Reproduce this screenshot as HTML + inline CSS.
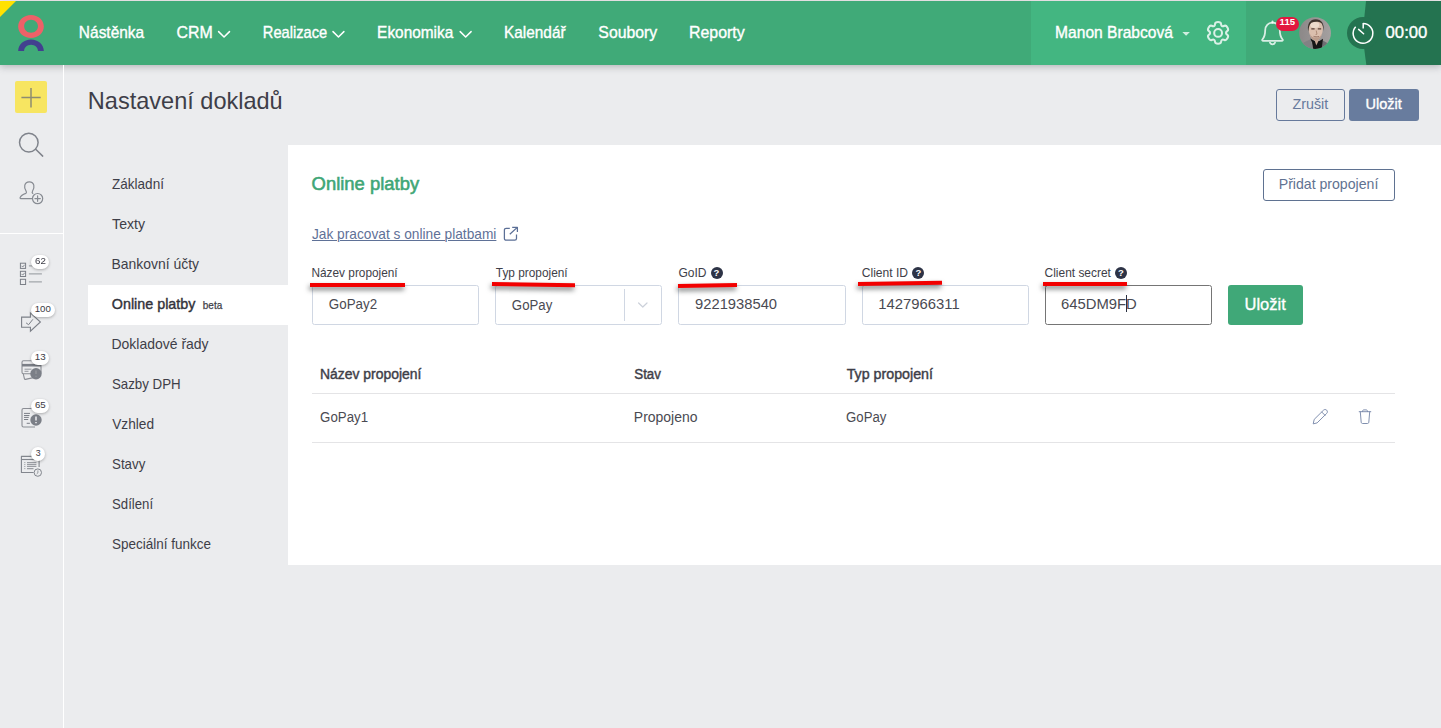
<!DOCTYPE html>
<html lang="cs">
<head>
<meta charset="utf-8">
<title>Nastavení dokladů</title>
<style>
*{box-sizing:border-box;margin:0;padding:0}
html,body{width:1441px;height:728px;overflow:hidden}
body{font-family:"Liberation Sans",sans-serif;background:#ebecee;color:#3b3b45;position:relative}
.abs{position:absolute}
svg{position:absolute;overflow:visible}
.t{position:absolute;white-space:nowrap;line-height:1;transform-origin:0 0}
#topline{left:0;top:0;width:1441px;height:1px;background:#f1ecee}
#hdr{left:0;top:1px;width:1441px;height:64px;background:#40aa78;box-shadow:0 2px 7px rgba(60,60,70,.30)}
#hdr .user{left:1031px;top:0;width:215px;height:64px;background:#43b681}
#hdr .timer{left:1364px;top:0;width:77px;height:64px;background:#247350;clip-path:polygon(2px 0,0 30%,0 72%,2.3px 100%,100% 100%,100% 0)}
#hdr .tcirc{left:1346.5px;top:15.5px;width:32px;height:32px;border-radius:50%;background:#247350}
#hdr .tri{left:0;top:0;width:0;height:0;border-top:16.5px solid #ffe100;border-right:16.5px solid transparent}
#side{left:0;top:65px;width:64px;height:663px;border-right:1px solid #fff}
#side .sep{left:0;top:168px;width:63px;height:1px;background:#fff}
.badge{position:absolute;background:#fff;border-radius:8px;height:14.2px;box-shadow:0 1px 3px rgba(0,0,0,.28)}
.btn{position:absolute;border-radius:3px}
#panel{left:288px;top:145px;width:1153px;height:420px;background:#fff}
#active{left:88px;top:285px;width:200px;height:40px;background:#fff}
.inp{position:absolute;top:285px;height:40px;width:167px;border:1px solid #d0d7e3;border-radius:2.5px;background:#fff}
.red{position:absolute;height:4px;background:#f20000;box-shadow:-1px 3px 5px rgba(30,35,35,.6);transform-origin:0 50%}
.hl{position:absolute;left:312px;width:1083px;height:1px;background:#e4e4e6}
.q{position:absolute;width:12px;height:12px;border-radius:50%;background:#2d3346;color:#fff;font-size:9.5px;font-weight:bold;line-height:12px;text-align:center}
</style>
</head>
<body>
<div id="topline" class="abs"></div>

<!-- HEADER -->
<div id="hdr" class="abs">
  <div class="abs user"></div>
  <div class="abs timer"></div>
  <div class="abs tcirc"></div>
  <div class="abs tri"></div>
</div>
<svg class="ov" width="1441" height="728" viewBox="0 0 1441 728" style="left:0;top:0" fill="none">
<!-- logo -->
<path fill="#ee6168" fill-rule="evenodd" d="M31 14.9c7.1 0 12.85 5.15 12.85 11.5S38.1 37.9 31 37.900S18.15 32.75 18.15 26.4 23.9 14.9 31 14.9zm.05 4.9c-3.85 0-6.95 2.9-6.950 6.5s3.1 6.5 6.950 6.5 6.950-2.900 6.950-6.5-3.100-6.500-6.950-6.500z"/>
<path fill="#42408f" d="M18.15 50.9c0-6.350 5.750-11.500 12.850-11.500s12.850 5.150 12.850 11.500h-5.850c0-3.400-3.100-6.200-6.950-6.200s-6.950 2.800-6.950 6.200z"/>
<!-- nav chevrons -->
<g stroke="#fff" stroke-width="1.5" stroke-linecap="round" stroke-linejoin="round">
<path d="M218.6 31.6l5.450 5.400 5.450-5.400"/>
<path d="M333 31.600l5.450 5.400 5.450-5.400"/>
<path d="M460.200 31.600l5.450 5.400 5.450-5.400"/>
</g>
<!-- caret -->
<path fill="#fff" fill-opacity=".75" d="M1182.300 31.900h7.600l-3.800 3.900z"/>
<!-- gear -->
<g stroke="#fff" stroke-opacity=".8" stroke-width="2.050" stroke-linejoin="round">
<circle cx="1218.100" cy="32.900" r="3.900"/>
<path d="M1222.02 26.02Q1221.18 25.54 1221.02 23.80Q1220.85 22.06 1218.05 22.06Q1215.25 22.06 1215.08 23.80Q1214.92 25.54 1214.08 26.02Q1213.24 26.51 1211.65 25.78Q1210.06 25.05 1208.66 27.48Q1207.26 29.91 1208.68 30.92Q1210.11 31.93 1210.11 32.90Q1210.11 33.87 1208.68 34.88Q1207.26 35.89 1208.66 38.32Q1210.06 40.75 1211.65 40.02Q1213.24 39.29 1214.08 39.78Q1214.92 40.26 1215.08 42.00Q1215.25 43.74 1218.05 43.74Q1220.85 43.74 1221.02 42.00Q1221.18 40.26 1222.02 39.78Q1222.86 39.29 1224.45 40.02Q1226.04 40.75 1227.44 38.32Q1228.84 35.89 1227.42 34.88Q1225.99 33.87 1225.99 32.90Q1225.99 31.93 1227.42 30.92Q1228.84 29.91 1227.44 27.48Q1226.04 25.05 1224.45 25.78Q1222.86 26.51 1222.02 26.02z"/>
</g>
<!-- bell -->
<g stroke="#fff" stroke-opacity=".8" stroke-width="1.800" stroke-linecap="round" stroke-linejoin="round">
<path d="M1272.500 22.700c-4.300 0-7.300 3.300-7.300 7.500 0 5.500-1.400 7.600-2.800 9.300-.500.600-.100 1.400.700 1.400h18.800c.800 0 1.200-.800.700-1.400-1.400-1.700-2.800-3.800-2.800-9.300 0-4.200-3-7.500-7.300-7.500z"/>
<path d="M1272.500 22.500v-1.200"/>
<path d="M1270 42.700c.400 1 1.400 1.600 2.500 1.600s2.100-.6 2.500-1.600"/>
</g>
<!-- badge -->
<rect x="1276" y="16.900" width="23" height="14.100" rx="7" fill="#e2173f"/>
<!-- avatar -->
<clipPath id="avc"><circle cx="1315.050" cy="33.050" r="15.900"/></clipPath>
<filter id="avb" x="-20%" y="-20%" width="140%" height="140%"><feGaussianBlur stdDeviation=".55"/></filter>
<linearGradient id="avg" x1="0" x2="1" y1="0" y2="0"><stop offset="0" stop-color="#8b8787"/><stop offset="1" stop-color="#a5a1a1"/></linearGradient>
<g clip-path="url(#avc)">
<rect x="1298" y="16" width="34" height="34" fill="url(#avg)"/>
<g filter="url(#avb)">
<path d="M1299 50l2.500-6.500 9-4.300 2.500 10.800z" fill="#828284"/>
<path d="M1331 50l-2-6-8-4.500-2 10.500z" fill="#6e6e72"/>
<path d="M1310.300 38.500l1.800 4 1.200 7.500h8.300l.8-7 .6-4.200-3.500 2.200h-5z" fill="#141414"/>
<path d="M1314.500 40l1.800 5.500 2.600-5.500z" fill="#c9a896"/>
<path d="M1308.600 28c0-5 3-8.200 7.100-8.200s7.200 3.200 7.200 8.200c0 5.500-2.600 12.300-7.200 12.300s-7.100-6.800-7.100-12.300z" fill="#dbbfae"/>
<ellipse cx="1314.800" cy="25" rx="4.500" ry="3" fill="#ecdacc"/>
<path d="M1308.300 31.500c-1.500-7.500 1.800-12.300 7.400-12.300 5.500 0 9 4 7.800 12-.2-3.800-.8-6.800-2.300-8.200-2.400-1.500-7-1.500-9.800-.2-2 1.800-2.600 4.700-3.100 8.700z" fill="#3d332d"/>
<path d="M1311.300 28.900h3.300M1317.800 28.900h3.400" stroke="#5a4036" stroke-width="1.100"/>
<path d="M1316.200 30.500l.8 3.700-1.400.3" stroke="#a98672" stroke-width=".9" fill="none"/>
<path d="M1313.600 36.400c1.400.7 3.700.7 5.200 0" stroke="#8f6a5c" stroke-width="1" fill="none"/>
<path d="M1309.800 33.500c.8 4.800 3.400 7 6 7s5.200-2.200 6-7c-1 3-3.500 4.300-6 4.300s-5-1.300-6-4.300z" fill="#bb9c8b"/>
</g>
</g>
<!-- clock -->
<g stroke="#fff" stroke-width="1.500" stroke-linecap="butt">
<path d="M1363.00 23.55A9.85 9.85 0 1 1 1355.68 26.81"/>
<path d="M1363.200 22.900v5.700"/>
<path d="M1358.600 29.400l5 4.300" stroke-linecap="round"/>
</g>
</svg>


<!-- SIDEBAR -->
<div id="side" class="abs">
  <div class="abs sep"></div>
</div>
<svg class="ov" width="70" height="728" viewBox="0 0 70 728" style="left:0;top:0" fill="none">
<!-- plus -->
<rect x="15" y="81" width="32" height="32" rx="2" fill="#f7e561"/>
<path d="M21.400 97.500h19.300M31 87.900v19.500" stroke="#8d8c72" stroke-width="1.500"/>
<!-- search -->
<g stroke="#7f838b" stroke-width="1.500" stroke-linecap="round">
<circle cx="28.800" cy="142.600" r="9.300"/>
<path d="M35.700 149.300l7 6.800"/>
</g>
<!-- user plus -->
<g stroke="#878b92" stroke-width="1.200" stroke-linecap="round" stroke-linejoin="round">
<path d="M32 198.600h-11.200c-.600 0-.900-.500-.700-1 .900-2.300 3.300-3.400 5.700-4.200.700-.300.800-1.400.300-2.200-1.400-1.900-1.800-4-1.300-6 .500-2.200 2.300-3.400 4.500-3.400s4 1.200 4.500 3.400c.500 2-.1 4.100-1.300 6-.500.800-.400 1.700.300 2.200"/>
<circle cx="37.600" cy="198.600" r="5.100" fill="#ebecee"/>
<path d="M37.600 195.900v5.400M34.900 198.600h5.400"/>
</g>
<!-- checklist -->
<g stroke="#7b7f87" stroke-width="1">
<rect x="20.400" y="263.200" width="5.200" height="5.200"/>
<rect x="20.400" y="271.300" width="5.200" height="5.200"/>
<rect x="20.400" y="279.300" width="5.200" height="5.200"/>
<path d="M21.500 265.800l1.200 1.200 2-2.300M21.500 273.900l1.200 1.200 2-2.300" stroke-width=".9"/>
</g>
<path d="M28.900 265.800h13M28.900 273.800h13M28.900 281.800h13" stroke="#a3a6ab" stroke-width="1.300"/>
<!-- arrow check -->
<g stroke="#7b7f87" stroke-width="1.100" stroke-linejoin="miter">
<path d="M21.600 317.100h8.800v-4.200l10 9.100-10 9.200v-4h-8.800z"/>
<path d="M26.100 322.900l2.500 1.800 4.300-5.400" stroke-width="1"/>
</g>
<!-- card with ! -->
<g stroke="#8a8d94" stroke-width="1.100" stroke-linejoin="round">
<path d="M23.200 373.500l1.200 5.200c.100.500.600.800 1.100.700l9-2"/>
<rect x="22" y="360.800" width="19" height="13" rx="1.500" fill="#ebecee"/>
<path d="M22 365.200h19" stroke-width="2.600" stroke="#7b7f87"/>
<path d="M24.500 369.200h7M24.500 371.300h4" stroke-width=".9"/>
</g>
<circle cx="36" cy="373.700" r="5.700" fill="#7b7f87"/>
<path d="M36 370.500v3.600M36 375.700v1.100" stroke="#92959b" stroke-width="1.500"/>
<!-- doc with ! -->
<g stroke="#8a8d94" stroke-width="1.100" stroke-linejoin="round">
<path d="M35.500 408.500h-12c-.8 0-1.500.7-1.500 1.500v15.500c0 .8.700 1.500 1.500 1.500h11.500"/>
<path d="M24 413.400h6M24 415.500h5.400M24 417.400h4.800M24 419.500h4.200M26.700 423.300h3.200" stroke-width="1" stroke="#7b7f87"/>
</g>
<circle cx="36" cy="420" r="5.700" fill="#7b7f87"/>
<path d="M36 416.600v3.800M36 422v1.200" stroke="#e6e7ea" stroke-width="1.600"/>
<!-- calendar list w clock -->
<g stroke="#82868d" stroke-width="1.100" stroke-linejoin="round">
<path d="M33.600 472.500h-12.200v-16.100h17.700v10.500"/>
<path d="M21.400 459.500h17.700"/>
<path d="M24.200 462.600h1.200M24.200 464.600h1.200M24.200 466.500h1.200M24.200 468.600h1.200" stroke-width=".9" stroke="#9a9da3"/>
<path d="M27 462.600h9.400M27 464.600h9.400M27 466.500h9.400M27 468.600h6.500" stroke-width="1.200" stroke="#9a9da3"/>
<circle cx="37.800" cy="472.600" r="3.700" fill="#ebecee" stroke-width="1"/>
<path d="M37.900 470.400v2.500l-1.200 1" stroke-width=".8"/>
</g>
</svg>


<div class="badge" style="left:31px;top:254.7px;width:18.4px"></div>
<div class="badge" style="left:30.8px;top:302.6px;width:24px"></div>
<div class="badge" style="left:31px;top:350.6px;width:18.4px"></div>
<div class="badge" style="left:31px;top:398.8px;width:18.4px"></div>
<div class="badge" style="left:31px;top:446.8px;width:14.4px"></div>

<!-- MAIN -->
<div id="panel" class="abs"></div>
<div id="active" class="abs"></div>
<div class="btn" style="left:1276px;top:89px;width:69px;height:32px;border:1px solid #66799b;background:transparent"></div>
<div class="btn" style="left:1349px;top:89px;width:70px;height:32px;background:#687c9e"></div>
<div class="btn" style="left:1263px;top:169px;width:132px;height:32px;border:1px solid #5f7291;background:#fff"></div>

<div class="inp" style="left:312px"></div>
<div class="inp" style="left:495px"></div>
<div class="inp" style="left:678px;width:168px"></div>
<div class="inp" style="left:862px"></div>
<div class="inp" style="left:1045px;border-color:#757575"></div>
<div class="abs" style="left:624px;top:289px;width:1px;height:32px;background:#d0d7e3"></div>
<div class="btn" style="left:1228px;top:285px;width:75px;height:40px;background:#40a878"></div>
<div class="abs" style="left:1126px;top:295px;width:1px;height:17px;background:#2a3040"></div>

<div class="red" style="left:310px;top:283px;width:95px"></div>
<div class="red" style="left:492px;top:282px;width:83px;transform:rotate(.85deg)"></div>
<div class="red" style="left:678px;top:283.5px;width:59px;transform:rotate(-1deg)"></div>
<div class="red" style="left:858px;top:282px;width:84px;transform:rotate(-.85deg)"></div>
<div class="red" style="left:1043px;top:282px;width:84px"></div>

<div class="q" style="left:710.5px;top:266.9px">?</div>
<div class="q" style="left:912.3px;top:266.9px">?</div>
<div class="q" style="left:1115px;top:266.9px">?</div>

<div class="hl" style="top:393px"></div>
<div class="hl" style="top:442px"></div>
<svg class="ov" width="1441" height="728" viewBox="0 0 1441 728" style="left:0;top:0" fill="none">
<!-- external link -->
<g stroke="#5b6f96" stroke-width="1.250" stroke-linecap="butt" stroke-linejoin="round">
<path d="M509.800 228.300h-3.700a1.700 1.700 0 0 0-1.700 1.700v8.500a1.700 1.700 0 0 0 1.700 1.700h8.700a1.700 1.700 0 0 0 1.700-1.700v-3.900"/>
<path d="M509.800 234.300l7.200-6.700M512.200 227.400h5.200v4.600"/>
</g>
<!-- select chevron -->
<path d="M638.600 303l4.200 4 4.200-4" stroke="#ccd1da" stroke-width="1.200" stroke-linecap="round" stroke-linejoin="round"/>
<!-- pencil -->
<g stroke="#7383a6" stroke-width=".9" stroke-linejoin="round" stroke-linecap="round">
<path d="M1313.300 423.500l.9-4.100 9.300-9.200c.9-.9 2.300-.9 3.200 0l0 0c.9.900.9 2.300 0 3.200l-9.300 9.200z"/>
<path d="M1321.700 412l3.300 3.300"/>
</g>
<!-- trash -->
<g stroke="#7383a6" stroke-width=".9" stroke-linejoin="round" stroke-linecap="round">
<path d="M1359.200 411.700h11.600"/>
<path d="M1362.300 411.500c0-1 .8-1.600 1.700-1.600h2c.9 0 1.700.6 1.700 1.600"/>
<path d="M1360.300 411.900l.9 10.400c.1.700.6 1.200 1.300 1.200h5c.7 0 1.200-.5 1.300-1.200l.9-10.400"/>
</g>
</svg>


<div class="t" style="left:78px;top:23.61px;font-size:17px;color:#fff;transform:translateX(0.87px) scaleX(0.9095);-webkit-text-stroke:.38px #fff;">Nástěnka</div>
<div class="t" style="left:176px;top:23.61px;font-size:17px;color:#fff;transform:translateX(0.59px) scaleX(0.9360);-webkit-text-stroke:.38px #fff;">CRM</div>
<div class="t" style="left:262px;top:23.61px;font-size:17px;color:#fff;transform:translateX(0.85px) scaleX(0.8623);-webkit-text-stroke:.38px #fff;">Realizace</div>
<div class="t" style="left:377px;top:23.61px;font-size:17px;color:#fff;transform:translateX(0.12px) scaleX(0.9052);-webkit-text-stroke:.38px #fff;">Ekonomika</div>
<div class="t" style="left:504px;top:23.61px;font-size:17px;color:#fff;transform:translateX(0.09px) scaleX(0.9030);-webkit-text-stroke:.38px #fff;">Kalendář</div>
<div class="t" style="left:598px;top:23.61px;font-size:17px;color:#fff;transform:translateX(0.35px) scaleX(0.9302);-webkit-text-stroke:.38px #fff;">Soubory</div>
<div class="t" style="left:689px;top:23.61px;font-size:17px;color:#fff;transform:translateX(0.03px) scaleX(0.9356);-webkit-text-stroke:.38px #fff;">Reporty</div>
<div class="t" style="left:1055px;top:23.61px;font-size:17px;color:#fff;transform:translateX(0.05px) scaleX(0.9174);-webkit-text-stroke:.38px #fff;">Manon Brabcová</div>
<div class="t" style="left:1385px;top:23.61px;font-size:17px;color:#fff;transform:translateX(0.58px) scaleX(0.9825);-webkit-text-stroke:.38px #fff;">00:00</div>
<div class="t" style="left:1279px;top:18.38px;font-size:9px;color:#fff;transform:translateX(0.62px) scaleX(1.0632);font-weight:bold;">115</div>
<div class="t" style="left:87px;top:88.68px;font-size:24px;color:#3e3e48;transform:translateX(0.86px) scaleX(0.9801);">Nastavení dokladů</div>
<div class="t" style="left:1292px;top:96.30px;font-size:15px;color:#66799b;transform:translateX(0.49px) scaleX(0.9540);">Zrušit</div>
<div class="t" style="left:1365px;top:96.30px;font-size:15px;color:#fff;transform:translateX(0.51px) scaleX(0.9676);-webkit-text-stroke:.38px #fff;">Uložit</div>
<div class="t" style="left:111px;top:176.30px;font-size:15px;color:#3e3e48;transform:translateX(1.00px) scaleX(0.9025);">Základní</div>
<div class="t" style="left:112px;top:216.30px;font-size:15px;color:#3e3e48;transform:translateX(0.09px) scaleX(0.9381);">Texty</div>
<div class="t" style="left:111px;top:256.30px;font-size:15px;color:#3e3e48;transform:translateX(0.38px) scaleX(0.9297);">Bankovní účty</div>
<div class="t" style="left:111px;top:296.30px;font-size:15px;color:#33333b;transform:translateX(0.79px) scaleX(0.9548);-webkit-text-stroke:.42px #33333b;">Online platby</div>
<div class="t" style="left:202px;top:300.11px;font-size:10.5px;color:#3e3e48;transform:translateX(0.83px) scaleX(0.9479);-webkit-text-stroke:.25px #3e3e48;">beta</div>
<div class="t" style="left:111px;top:336.30px;font-size:15px;color:#3e3e48;transform:translateX(0.52px) scaleX(0.9311);">Dokladové řady</div>
<div class="t" style="left:111px;top:376.30px;font-size:15px;color:#3e3e48;transform:translateX(0.90px) scaleX(0.8873);">Sazby DPH</div>
<div class="t" style="left:112px;top:416.30px;font-size:15px;color:#3e3e48;transform:translateX(0.19px) scaleX(0.9121);">Vzhled</div>
<div class="t" style="left:112px;top:456.30px;font-size:15px;color:#3e3e48;transform:translateX(0.06px) scaleX(0.8861);">Stavy</div>
<div class="t" style="left:112px;top:496.30px;font-size:15px;color:#3e3e48;transform:translateX(0.01px) scaleX(0.8786);">Sdílení</div>
<div class="t" style="left:112px;top:536.30px;font-size:15px;color:#3e3e48;transform:translateX(0.03px) scaleX(0.8980);">Speciální funkce</div>
<div class="t" style="left:311px;top:174.76px;font-size:18px;color:#3fa676;transform:translateX(0.57px) scaleX(1.0236);-webkit-text-stroke:.55px #3fa676;">Online platby</div>
<div class="t" style="left:1278px;top:176.30px;font-size:15px;color:#5f7291;transform:translateX(0.73px) scaleX(0.9402);">Přidat propojení</div>
<div class="t" style="left:311px;top:226.30px;font-size:15px;color:#5f7197;transform:translateX(0.97px) scaleX(0.9140);text-decoration:underline;text-decoration-thickness:1px;text-underline-offset:1px;">Jak pracovat s online platbami</div>
<div class="t" style="left:311px;top:266.40px;font-size:13px;color:#3e3e48;transform:translateX(0.46px) scaleX(0.9104);">Název propojení</div>
<div class="t" style="left:495px;top:266.40px;font-size:13px;color:#3e3e48;transform:translateX(0.84px) scaleX(0.9108);">Typ propojení</div>
<div class="t" style="left:678px;top:266.40px;font-size:13px;color:#3e3e48;transform:translateX(0.51px) scaleX(0.9240);">GoID</div>
<div class="t" style="left:861px;top:266.40px;font-size:13px;color:#3e3e48;transform:translateX(0.76px) scaleX(0.9292);">Client ID</div>
<div class="t" style="left:1044px;top:266.40px;font-size:13px;color:#3e3e48;transform:translateX(0.57px) scaleX(0.9181);">Client secret</div>
<div class="t" style="left:328px;top:296.30px;font-size:15px;color:#4a4a52;transform:translateX(0.82px) scaleX(0.8908);">GoPay2</div>
<div class="t" style="left:511px;top:296.88px;font-size:15.5px;color:#4a4a52;transform:translateX(0.86px) scaleX(0.8521);">GoPay</div>
<div class="t" style="left:695px;top:296.30px;font-size:15px;color:#4a4a52;transform:translateX(0.05px) scaleX(0.9830);">9221938540</div>
<div class="t" style="left:878px;top:296.30px;font-size:15px;color:#4a4a52;transform:translateX(0.32px) scaleX(0.9888);">1427966311</div>
<div class="t" style="left:1060px;top:296.30px;font-size:15px;color:#4a4a52;transform:translateX(1.00px) scaleX(0.9884);">645DM9FD</div>
<div class="t" style="left:1244px;top:295.91px;font-size:17px;color:#fff;transform:translateX(0.51px) scaleX(0.9699);-webkit-text-stroke:.35px #fff;">Uložit</div>
<div class="t" style="left:319px;top:367.15px;font-size:14px;color:#3e3e48;transform:translateX(0.93px) scaleX(0.9946);-webkit-text-stroke:.42px #3e3e48;">Název propojení</div>
<div class="t" style="left:634px;top:367.15px;font-size:14px;color:#3e3e48;transform:translateX(0.24px) scaleX(0.9519);-webkit-text-stroke:.42px #3e3e48;">Stav</div>
<div class="t" style="left:846px;top:367.15px;font-size:14px;color:#3e3e48;transform:translateX(0.68px) scaleX(1.0169);-webkit-text-stroke:.42px #3e3e48;">Typ propojení</div>
<div class="t" style="left:320px;top:410.15px;font-size:14px;color:#4a4a52;transform:translateX(0.10px) scaleX(0.9469);">GoPay1</div>
<div class="t" style="left:633px;top:410.15px;font-size:14px;color:#4a4a52;transform:translateX(0.84px) scaleX(0.9972);">Propojeno</div>
<div class="t" style="left:846px;top:410.15px;font-size:14px;color:#4a4a52;transform:translateX(0.06px) scaleX(0.9424);">GoPay</div>
<div class="t" style="left:35px;top:255.96px;font-size:9.5px;color:#3a3a44;transform:translateX(0.00px) scaleX(1.0261);">62</div>
<div class="t" style="left:34px;top:303.96px;font-size:9.5px;color:#3a3a44;transform:translateX(0.64px) scaleX(1.0194);">100</div>
<div class="t" style="left:34px;top:351.96px;font-size:9.5px;color:#3a3a44;transform:translateX(0.78px) scaleX(1.0359);">13</div>
<div class="t" style="left:34px;top:399.96px;font-size:9.5px;color:#3a3a44;transform:translateX(0.95px) scaleX(1.0198);">65</div>
<div class="t" style="left:35px;top:447.96px;font-size:9.5px;color:#3a3a44;transform:translateX(0.87px) scaleX(0.9272);">3</div>
</body>
</html>
